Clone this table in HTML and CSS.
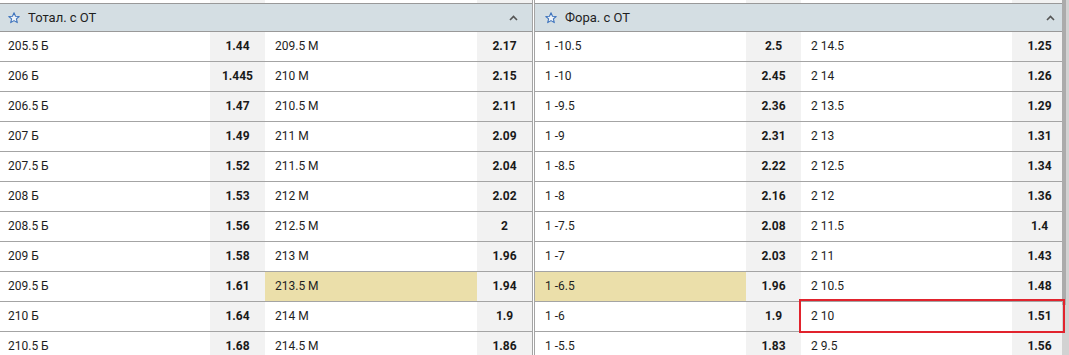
FILE: index.html
```html
<!DOCTYPE html>
<html lang="ru">
<head>
<meta charset="utf-8">
<title>Тотал / Фора</title>
<link rel="stylesheet" href="styles.css">
</head>
<body>
<div class="page">
  <section class="panel panel--left">
    <div class="row row--stub"><div class="outcome"><span class="name"></span><span class="odds"></span></div><div class="outcome"><span class="name"></span><span class="odds"></span></div></div>
    <div class="header">
      <svg class="star" width="12" height="12" viewBox="0 0 12 12"><polygon points="6,0.8 7.5,4.2 11.2,4.5 8.4,6.9 9.3,10.6 6,8.6 2.7,10.6 3.6,6.9 0.8,4.5 4.5,4.2" fill="#eef3f8" stroke="#3f74bd" stroke-width="1.1" stroke-linejoin="round"/></svg>
      <span class="title">Тотал. с ОТ</span>
      <svg class="chev" width="9" height="6" viewBox="0 0 9 6"><polyline points="1,5 4.5,1.5 8,5" fill="none" stroke="#555" stroke-width="1.6"/></svg>
    </div>
    <div class="row"><div class="outcome"><span class="name">205.5 Б</span><span class="odds">1.44</span></div><div class="outcome"><span class="name">209.5 М</span><span class="odds">2.17</span></div></div>
    <div class="row"><div class="outcome"><span class="name">206 Б</span><span class="odds">1.445</span></div><div class="outcome"><span class="name">210 М</span><span class="odds">2.15</span></div></div>
    <div class="row"><div class="outcome"><span class="name">206.5 Б</span><span class="odds">1.47</span></div><div class="outcome"><span class="name">210.5 М</span><span class="odds">2.11</span></div></div>
    <div class="row"><div class="outcome"><span class="name">207 Б</span><span class="odds">1.49</span></div><div class="outcome"><span class="name">211 М</span><span class="odds">2.09</span></div></div>
    <div class="row"><div class="outcome"><span class="name">207.5 Б</span><span class="odds">1.52</span></div><div class="outcome"><span class="name">211.5 М</span><span class="odds">2.04</span></div></div>
    <div class="row"><div class="outcome"><span class="name">208 Б</span><span class="odds">1.53</span></div><div class="outcome"><span class="name">212 М</span><span class="odds">2.02</span></div></div>
    <div class="row"><div class="outcome"><span class="name">208.5 Б</span><span class="odds">1.56</span></div><div class="outcome"><span class="name">212.5 М</span><span class="odds">2</span></div></div>
    <div class="row"><div class="outcome"><span class="name">209 Б</span><span class="odds">1.58</span></div><div class="outcome"><span class="name">213 М</span><span class="odds">1.96</span></div></div>
    <div class="row"><div class="outcome"><span class="name">209.5 Б</span><span class="odds">1.61</span></div><div class="outcome"><span class="name name--hl">213.5 М</span><span class="odds">1.94</span></div></div>
    <div class="row"><div class="outcome"><span class="name">210 Б</span><span class="odds">1.64</span></div><div class="outcome"><span class="name">214 М</span><span class="odds">1.9</span></div></div>
    <div class="row"><div class="outcome"><span class="name">210.5 Б</span><span class="odds">1.68</span></div><div class="outcome"><span class="name">214.5 М</span><span class="odds">1.86</span></div></div>
  </section>
  <section class="panel panel--right">
    <div class="row row--stub"><div class="outcome"><span class="name"></span><span class="odds"></span></div><div class="outcome"><span class="name"></span><span class="odds"></span></div></div>
    <div class="header">
      <svg class="star" width="12" height="12" viewBox="0 0 12 12"><polygon points="6,0.8 7.5,4.2 11.2,4.5 8.4,6.9 9.3,10.6 6,8.6 2.7,10.6 3.6,6.9 0.8,4.5 4.5,4.2" fill="#eef3f8" stroke="#3f74bd" stroke-width="1.1" stroke-linejoin="round"/></svg>
      <span class="title">Фора. с ОТ</span>
      <svg class="chev" width="9" height="6" viewBox="0 0 9 6"><polyline points="1,5 4.5,1.5 8,5" fill="none" stroke="#555" stroke-width="1.6"/></svg>
    </div>
    <div class="row"><div class="outcome"><span class="name">1 -10.5</span><span class="odds">2.5</span></div><div class="outcome"><span class="name">2 14.5</span><span class="odds">1.25</span></div></div>
    <div class="row"><div class="outcome"><span class="name">1 -10</span><span class="odds">2.45</span></div><div class="outcome"><span class="name">2 14</span><span class="odds">1.26</span></div></div>
    <div class="row"><div class="outcome"><span class="name">1 -9.5</span><span class="odds">2.36</span></div><div class="outcome"><span class="name">2 13.5</span><span class="odds">1.29</span></div></div>
    <div class="row"><div class="outcome"><span class="name">1 -9</span><span class="odds">2.31</span></div><div class="outcome"><span class="name">2 13</span><span class="odds">1.31</span></div></div>
    <div class="row"><div class="outcome"><span class="name">1 -8.5</span><span class="odds">2.22</span></div><div class="outcome"><span class="name">2 12.5</span><span class="odds">1.34</span></div></div>
    <div class="row"><div class="outcome"><span class="name">1 -8</span><span class="odds">2.16</span></div><div class="outcome"><span class="name">2 12</span><span class="odds">1.36</span></div></div>
    <div class="row"><div class="outcome"><span class="name">1 -7.5</span><span class="odds">2.08</span></div><div class="outcome"><span class="name">2 11.5</span><span class="odds">1.4</span></div></div>
    <div class="row"><div class="outcome"><span class="name">1 -7</span><span class="odds">2.03</span></div><div class="outcome"><span class="name">2 11</span><span class="odds">1.43</span></div></div>
    <div class="row"><div class="outcome"><span class="name name--hl">1 -6.5</span><span class="odds">1.96</span></div><div class="outcome"><span class="name">2 10.5</span><span class="odds">1.48</span></div></div>
    <div class="row"><div class="outcome"><span class="name">1 -6</span><span class="odds">1.9</span></div><div class="outcome outcome--selected"><span class="name">2 10</span><span class="odds">1.51</span></div></div>
    <div class="row"><div class="outcome"><span class="name">1 -5.5</span><span class="odds">1.83</span></div><div class="outcome"><span class="name">2 9.5</span><span class="odds">1.56</span></div></div>
  </section>
  <div class="scrollbar"><div class="thumb"></div></div>
</div>
</body>
</html>
```
FILE: styles.css
```css
* { box-sizing: border-box; }
html, body {
  margin: 0;
  padding: 0;
  background: #fff;
  overflow: hidden;
}
body {
  font-family: Roboto, "Liberation Sans", Arial, sans-serif;
  font-size: 12px;
  color: #1e1e1e;
}
.page {
  position: relative;
  display: flex;
  gap: 1px;
  width: 1069px;
  height: 355px;
  overflow: hidden;
}
.panel {
  flex: none;
}
.panel--left {
  width: 535px;
  margin-left: -2px;
  border-right: 1px solid #a4a4a4;
}
.panel--right {
  width: 535px;
  border-left: 1px solid #a4a4a4;
}
.row {
  display: grid;
  grid-template-columns: 1fr 1fr;
  height: 30px;
  border-bottom: 1px solid #a4a4a4;
}
.panel--right .row {
  grid-template-columns: 266px 266px;
}
.row--stub {
  height: 4px;
  overflow: hidden;
  border-bottom-color: #999;
}
.outcome {
  position: relative;
  display: grid;
  grid-template-columns: 1fr 55px;
  height: 29px;
}
.row--stub .outcome { height: 3px; }
.name {
  padding-left: 10px;
  line-height: 29px;
  white-space: nowrap;
  overflow: hidden;
}
.name--hl {
  background: #ebdfaa;
}
.odds {
  background: #f2f2f2;
  text-align: center;
  font-weight: 700;
  line-height: 29px;
  color: #1a1a1a;
}
.outcome--selected::after {
  content: "";
  position: absolute;
  top: -3px;
  bottom: -2px;
  left: -2px;
  right: 2px;
  border: 2px solid #e1232d;
  z-index: 3;
  pointer-events: none;
}
.header {
  display: flex;
  align-items: center;
  height: 28px;
  padding: 0 14px 0 10px;
  background: #d4dee3;
  border-bottom: 1px solid #999;
}
.star {
  flex: none;
  margin-top: 1px;
}
.title {
  margin-left: 8px;
  font-size: 13px;
  color: #1f1f1f;
  flex: 1;
}
.chev {
  flex: none;
  margin-top: 1px;
}
.scrollbar {
  position: absolute;
  top: 0;
  right: 0;
  width: 7px;
  height: 100%;
  background: #d2d2d2;
  z-index: 2;
}
.thumb {
  width: 4px;
  height: 305px;
  background: #ababab;
}
```
